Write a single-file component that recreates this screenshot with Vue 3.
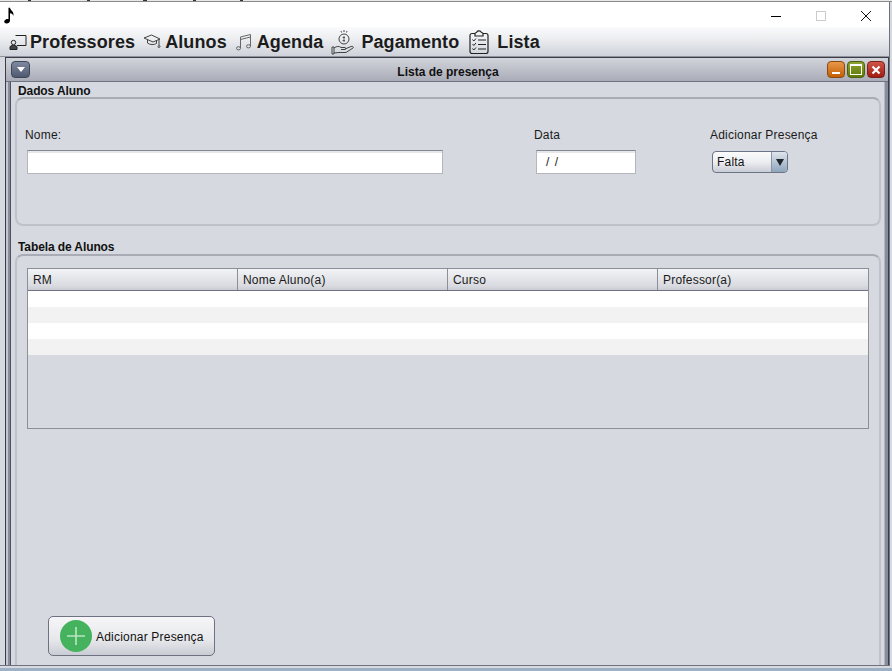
<script setup>
const columns = ['RM', 'Nome Aluno(a)', 'Curso', 'Professor(a)']
const rows = [0, 1, 2, 3]
</script>

<template>
  <div class="screen">
    <div class="behind"></div>
    <div class="window">
      <div class="titlebar">
        <svg class="note" width="14" height="17" viewBox="0 0 16 20">
          <path d="M6.2 1 H8 C8.4 4.5 13.5 5 11.8 11 C11.8 8.6 10 7.6 8 7.4 V16 C8 18.5 5.6 19.8 3.4 19.5 C1.5 19.2 .6 17.6 1.6 16 C2.6 14.4 4.8 13.7 6.2 14.4 Z" fill="#000"/>
        </svg>
        <div class="winctrls">
          <svg width="12" height="12" viewBox="0 0 12 12"><path d="M1 6.5H11" stroke="#000" stroke-width="1"/></svg>
          <svg width="12" height="12" viewBox="0 0 12 12"><rect x="1.5" y="1.5" width="9" height="9" fill="none" stroke="#ccc"/></svg>
          <svg width="12" height="12" viewBox="0 0 12 12"><path d="M1 1L11 11M11 1L1 11" stroke="#111" stroke-width="1"/></svg>
        </div>
      </div>
      <div class="menubar">
        <div class="menu">
          <svg width="18" height="18" viewBox="0 0 18 18" fill="none" stroke="#222" stroke-width="1"><path d="M6.5 2.5H17V12.5H8"/><circle cx="4.5" cy="9.5" r="2.2"/><path d="M1 16.5V14C1 13 2.5 12.5 4.5 12.5C6.5 12.5 8 13 8 14V16.5Z" fill="#444"/></svg>
          <span>Professores</span>
        </div>
        <div class="menu">
          <svg width="18" height="18" viewBox="0 0 18 18" fill="none" stroke="#444" stroke-width="1"><path d="M1 5L8.5 2L17 6L10 9Z"/><path d="M4.5 7V10C7 12 11 12 13.5 10.5V7.5"/><path d="M16 6V12"/><circle cx="16" cy="13.5" r="1"/></svg>
          <span>Alunos</span>
        </div>
        <div class="menu">
          <svg width="18" height="18" viewBox="0 0 18 18" fill="none" stroke="#666" stroke-width="1"><path d="M5.5 15V4L15.5 1.5V13"/><path d="M5.5 6.5L15.5 4"/><ellipse cx="3.5" cy="15.3" rx="2" ry="1.6"/><ellipse cx="13.5" cy="13.3" rx="2" ry="1.6"/></svg>
          <span>Agenda</span>
        </div>
        <div class="menu">
          <svg width="24" height="26" viewBox="0 0 24 26" fill="none" stroke="#444" stroke-width="1"><circle cx="13" cy="10" r="5"/><path d="M13 7V13M11.5 8.5H14M11.5 11.5H14" stroke-width=".8"/><path d="M13 1V3M10 2L10.5 3.5M16 2L15.5 3.5"/><path d="M1 18H3V25H1ZM3 19C6 17 8 17 10 18.5H14C15 18.5 15 20.5 14 20.5H10M14 20L20 17.5C22 17 23 18 22 19L15 23.5H8L3 24"/></svg>
          <span>Pagamento</span>
        </div>
        <div class="menu">
          <svg width="20" height="24" viewBox="0 0 20 24" fill="none" stroke="#222" stroke-width="1.2"><rect x="1" y="3.5" width="18" height="20" rx="2"/><path d="M6 3.5C6 2.5 8 2.5 8 2C8 .5 12 .5 12 2C12 2.5 14 2.5 14 3.5V6H6Z" fill="#f4f4f6"/><path d="M3.5 9.5L4.8 11L7 8.5M3.5 14L4.8 15.5L7 13M3.5 18.5L4.8 20L7 17.5M9 10H17M9 14.5H17M9 19H17" stroke-width="1"/></svg>
          <span>Lista</span>
        </div>
      </div>

      <div class="frame">
        <div class="frame-title">
          <button class="sysmenu" type="button"><i></i></button>
          <span class="frame-name">Lista de presença</span>
          <div class="frame-btns">
            <button class="fb orange" type="button"><i class="bar"></i></button>
            <button class="fb green" type="button"><i class="box"></i></button>
            <button class="fb red" type="button">
              <svg width="10" height="10" viewBox="0 0 10 10"><path d="M1.5 1.5L8.5 8.5M8.5 1.5L1.5 8.5" stroke="#fff" stroke-width="2.2"/></svg>
            </button>
          </div>
        </div>

        <div class="frame-body">
          <h2 class="legend first">Dados Aluno</h2>
          <section class="group fields">
            <div class="field name">
              <label>Nome:</label>
              <div class="input"></div>
            </div>
            <div class="field date">
              <label>Data</label>
              <div class="input date-input">/ /</div>
            </div>
            <div class="field presence">
              <label>Adicionar Presença</label>
              <div class="combo">
                <span class="combo-val">Falta</span>
                <span class="combo-arrow"><i></i></span>
              </div>
            </div>
          </section>

          <h2 class="legend second">Tabela de Alunos</h2>
          <section class="group table-group">
            <div class="table">
              <div class="thead">
                <div v-for="c in columns" :key="c" class="th">{{ c }}</div>
              </div>
              <div v-for="r in rows" :key="r" class="tr" :class="{ odd: r % 2 }"></div>
            </div>
            <button class="add" type="button">
              <svg width="32" height="32" viewBox="0 0 32 32">
                <circle cx="16" cy="16" r="16" fill="#45b25e"/>
                <path d="M16 7V25M7 16H25" stroke="#b9e6c4" stroke-width="1.6"/>
              </svg>
              <span>Adicionar Presença</span>
            </button>
          </section>
        </div>
      </div>
    </div>
  </div>
</template>

<style>
html, body { margin: 0; background: #fff; }
</style>

<style scoped>
.screen {
  position: relative;
  width: 892px;
  height: 671px;
  overflow: hidden;
  background: linear-gradient(#d6d9e0 668px, #9fb0c5 668px);
  font-family: "Liberation Sans", Arial, sans-serif;
  color: #111;
}
.behind {
  height: 2px;
  background:
    linear-gradient(to right, transparent 28px, #333 28px, #333 31px, transparent 31px, transparent 87px, #333 87px, #333 90px, transparent 90px, transparent 143px, #333 143px, #333 147px, transparent 147px, transparent 193px, #333 193px, #333 196px, transparent 196px, transparent 240px, #333 240px, #333 243px, transparent 243px) 0 0 / 100% 1px no-repeat,
    linear-gradient(#e8e8e8 1px, #8c8c8c 1px);
}
.window {
  width: 889px;
  height: 663px;
  background: #d6d9e0;
  border-right: 1px solid #6e7280;
  border-bottom: 1px solid #6e7280;
  box-sizing: content-box;
}
.titlebar {
  height: 25px;
  background: #fff;
  display: flex;
  justify-content: space-between;
  align-items: flex-start;
}
.note { margin: 5px 0 0 3px; }
.winctrls { display: flex; gap: 33px; margin: 8px 17px 0 0; }
.menubar {
  height: 29px;
  background: linear-gradient(#fafafb, #eceef1 40%, #cfd2da);
  border-bottom: 1px solid #90939c;
  display: flex;
  align-items: center;
  padding-left: 9px;
  gap: 8px;
}
.menu { display: flex; align-items: center; gap: 4px; font-size: 18px; font-weight: 700; letter-spacing: .1px; color: #1c1c1c; height: 29px; }
.menu span { padding-top: 2px; }
.menu:nth-child(1) { gap: 3px; }
.menu:nth-child(4) { gap: 6px; }
.menu:nth-child(5) { gap: 8px; margin-left: 2px; }

.frame {
  margin-left: 5px;
  height: 607px;
  overflow: hidden;
  border: 1px solid #3a3d47;
  border-width: 1px 1px 0 1px;
  background: linear-gradient(to right, #c3c6cf 2px, #878d9d 2px);
  padding: 0 3px 0 4px;
}
.frame-title {
  height: 23px;
  margin: 0 -3px 0 -4px;
  padding: 0 3px 0 5px;
  background: linear-gradient(#d2d4db, #a9acb7);
  border-bottom: 1px solid #6f7280;
  display: flex;
  align-items: center;
  justify-content: space-between;
  position: relative;
}
.frame-name {
  position: absolute;
  left: 2px;
  right: 0;
  top: 7px;
  text-align: center;
  font-size: 12px;
  line-height: 14px;
  font-weight: 700;
  color: #111;
}
.sysmenu {
  width: 19px; height: 17px; padding: 0;
  border: 1px solid #3f4757;
  border-radius: 4px;
  background: linear-gradient(#7f8aa0, #4f5a72);
  display: flex; align-items: center; justify-content: center;
}
.sysmenu i {
  width: 0; height: 0;
  border-left: 4px solid transparent;
  border-right: 4px solid transparent;
  border-top: 5px solid #fff;
}
.frame-btns { display: flex; gap: 2px; position: relative; }
.fb {
  width: 18px; height: 17px; padding: 0;
  border-radius: 4px;
  display: flex; align-items: center; justify-content: center;
  position: relative;
}
.orange { background: linear-gradient(#e8974a, #c55f05); border: 1px solid #8a4a12; }
.green { background: linear-gradient(#8fa334, #5f7a05); border: 1px solid #4f5f12; }
.red { background: linear-gradient(#cf5545, #a01c14); border: 1px solid #7a2218; }
.bar { width: 8px; height: 2px; background: #fff; margin-top: 7px; }
.box { width: 10px; height: 8px; border: 1px solid #fff; border-top-width: 2px; }

.frame-body {
  height: 584px;
  background: #d6d9e0;
  border-left: 1px solid #4e525e;
  border-right: 1px solid #b3b6c0;
  padding: 0 3px 0 4px;
}
.legend {
  margin: 0 0 0 3px;
  font-size: 12px;
  font-weight: 700;
  letter-spacing: -.1px;
  color: #111;
  line-height: 14px;
}
.legend.first { padding-top: 2px; height: 13px; }
.legend.second { padding-top: 14px; }
.group {
  border: 2px solid #a9acb4;
  border-bottom-color: #bfc2ca;
  border-left-color: #bfc2ca;
  border-right-color: #bfc2ca;
  border-radius: 8px;
  box-sizing: border-box;
}
.fields {
  height: 129px;
  display: flex;
  align-items: flex-start;
  padding-top: 29px;
}
.field label { display: block; font-size: 12px; line-height: 14px; letter-spacing: .2px; color: #1a1a1a; }
.name { width: 509px; padding-left: 8px; }
.name .input { width: 416px; margin-left: 2px; }
.date { width: 176px; }
.date .input { width: 100px; margin-left: 2px; }
.presence { width: 140px; }
.input {
  height: 24px;
  margin-top: 8px;
  background: #fff;
  border: 1px solid #b4b6bc;
  border-top-color: #85878e;
  box-shadow: inset 0 2px 0 #e6e7ea;
  box-sizing: border-box;
}
.date-input { font-size: 12px; line-height: 23px; padding-left: 9px; word-spacing: 2px; color: #222; }
.combo {
  width: 76px; height: 22px;
  margin: 9px 0 0 2px;
  border: 1px solid #6b7587;
  border-radius: 4px;
  box-sizing: border-box;
  display: flex;
  overflow: hidden;
  background: linear-gradient(#fbfbfc, #eceef1 50%, #c9ccd4);
}
.combo-val { flex: 1; font-size: 12px; line-height: 20px; height: 20px; padding-left: 4px; letter-spacing: .2px; }
.combo-arrow {
  width: 15px;
  border-left: 1px solid #8a96a8;
  background: linear-gradient(#dfe5ec, #8ea5bc);
  display: flex; align-items: center; justify-content: center;
}
.combo-arrow i {
  width: 0; height: 0;
  border-left: 4px solid transparent;
  border-right: 4px solid transparent;
  border-top: 7px solid #22262c;
}
.table-group {
  height: 420px;
  padding: 12px 10px 0 10px;
  border-bottom: 0;
  border-radius: 8px 8px 0 0;
}
.table {
  height: 161px;
  border: 1px solid #8c8f98;
  box-sizing: border-box;
  background: #d6d9e0;
}
.thead { display: flex; height: 22px; border-bottom: 1px solid #6f7280; box-sizing: border-box; background: linear-gradient(#f2f3f5, #d9dbe1 80%, #c9ccd3); }
.th { width: 210px; font-size: 12px; line-height: 23px; padding-left: 5px; border-right: 1px solid #8c8f98; box-sizing: border-box; letter-spacing: .2px; color: #1a1a1a; }
.th:last-child { flex: 1; border-right: 0; }
.tr { height: 16px; background: #fff; }
.tr.odd { background: #f2f2f2; }
.add {
  margin: 187px 0 0 21px;
  width: 167px; height: 40px;
  border: 1px solid #6f7280;
  border-radius: 5px;
  padding: 0 0 0 11px;
  display: flex; align-items: center; gap: 4px;
  background: linear-gradient(#f6f6f8, #e7e8ec 60%, #c9ccd4);
  font: 12px "Liberation Sans", Arial, sans-serif;
  letter-spacing: .2px;
  color: #111;
}
.add span { padding-top: 2px; }
</style>
